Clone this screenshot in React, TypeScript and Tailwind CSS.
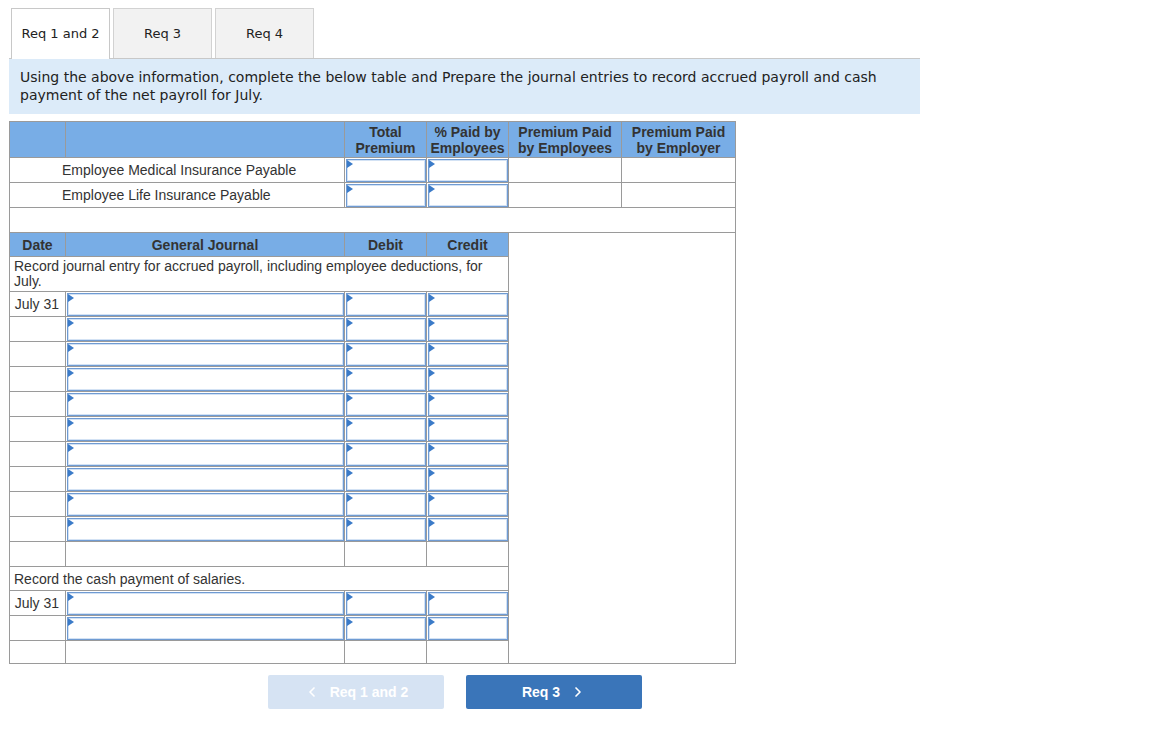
import { ChevronLeft, ChevronRight } from "lucide-react"

const tabs = ["Req 1 and 2", "Req 3", "Req 4"]

// small input box with the blue marker in its corner
function Field() {
  return (
    <div className="relative h-[23px] border border-[#6f9bd3] bg-white shadow-[inset_0_0_0_1px_#d3e2f4]">
      <span className="absolute left-0 top-0 h-0 w-0 border-y-[4px] border-l-[6px] border-y-transparent border-l-[#3b7bc8]" />
    </div>
  )
}

function EntryRow({ date }: { date?: string }) {
  return (
    <tr className="h-[25px]">
      <td className="border border-[#9a9a9a] pr-[6px] text-right align-middle">{date}</td>
      <td className="border border-[#9a9a9a] p-0 pl-px">
        <Field />
      </td>
      <td className="border border-[#9a9a9a] p-0 pl-px">
        <Field />
      </td>
      <td className="border border-[#9a9a9a] p-0 pl-px">
        <Field />
      </td>
    </tr>
  )
}

function EmptyRow({ h = "h-[25px]" }: { h?: string }) {
  return (
    <tr className={h}>
      <td className="border border-[#9a9a9a]" />
      <td className="border border-[#9a9a9a]" />
      <td className="border border-[#9a9a9a]" />
      <td className="border border-[#9a9a9a]" />
    </tr>
  )
}

export default function App() {
  const firstRows = Array.from({ length: 10 }, (_, i) => i)

  return (
    <div className="min-h-[756px] w-[1161px] bg-white pl-[9px] pt-[8px] text-[#333]">
      {/* Tabs */}
      <div className="flex w-[911px] gap-[3px] border-b border-[#c8c8c8] pl-[2px] font-['DejaVu_Sans',sans-serif] text-[13px]">
        {tabs.map((t, i) => (
          <div
            key={t}
            className={
              i === 0
                ? "-mb-px flex h-[51px] w-[99px] items-center justify-center border border-b-0 border-[#c8c8c8] bg-white text-[#222]"
                : "flex h-[50px] w-[99px] items-center justify-center border border-b-0 border-[#d2d2d2] bg-[#f2f2f2] text-[#222]"
            }
          >
            {t}
          </div>
        ))}
      </div>

      {/* Instructions */}
      <div className="w-[911px] bg-[#dcebf9] px-[11px] pb-[10px] pt-[9px] font-['DejaVu_Sans',sans-serif] text-[14px] leading-[18px] text-[#222]">
        Using the above information, complete the below table and Prepare the journal entries to record accrued payroll and cash
        payment of the net payroll for July.
      </div>

      {/* Table */}
      <table className="mt-[7px] w-[726px] table-fixed border-collapse font-['Liberation_Sans',Arial,sans-serif] text-[14px] leading-[16px] text-[#333]">
        <colgroup>
          <col className="w-[56px]" />
          <col className="w-[279px]" />
          <col className="w-[82px]" />
          <col className="w-[82px]" />
          <col className="w-[113px]" />
          <col className="w-[114px]" />
        </colgroup>
        <tbody>
          <tr className="h-[36px] bg-[#78ade6] font-bold">
            <th className="border border-[#9a9a9a]" />
            <th className="border border-[#9a9a9a]" />
            <th className="border border-[#9a9a9a] text-center font-bold">
              Total
              <br />
              Premium
            </th>
            <th className="border border-[#9a9a9a] text-center font-bold">
              % Paid by
              <br />
              Employees
            </th>
            <th className="border border-[#9a9a9a] text-center font-bold">
              Premium Paid
              <br />
              by Employees
            </th>
            <th className="border border-[#9a9a9a] text-center font-bold">
              Premium Paid
              <br />
              by Employer
            </th>
          </tr>
          {["Employee Medical Insurance Payable", "Employee Life Insurance Payable"].map((label) => (
            <tr key={label} className="h-[25px]">
              <td colSpan={2} className="border border-[#9a9a9a] pl-[52px] align-middle">
                {label}
              </td>
              <td className="border border-[#9a9a9a] p-0 pl-px">
                <Field />
              </td>
              <td className="border border-[#9a9a9a] p-0 pl-px">
                <Field />
              </td>
              <td className="border border-[#9a9a9a]" />
              <td className="border border-[#9a9a9a]" />
            </tr>
          ))}
          <tr className="h-[25px]">
            <td colSpan={6} className="border border-[#9a9a9a]" />
          </tr>

          {/* General journal */}
          <tr className="h-[24px] bg-[#78ade6] font-bold">
            <th className="border border-[#9a9a9a] text-center">Date</th>
            <th className="border border-[#9a9a9a] text-center">General Journal</th>
            <th className="border border-[#9a9a9a] text-center">Debit</th>
            <th className="border border-[#9a9a9a] text-center">Credit</th>
            <td rowSpan={17} colSpan={2} className="border border-[#9a9a9a] bg-white" />
          </tr>
          <tr className="h-[35px]">
            <td colSpan={4} className="border border-[#9a9a9a] px-[4px] align-middle leading-[15px]">
              Record journal entry for accrued payroll, including employee deductions, for July.
            </td>
          </tr>
          {firstRows.map((i) => (
            <EntryRow key={i} date={i === 0 ? "July 31" : undefined} />
          ))}
          <EmptyRow />
          <tr className="h-[24px]">
            <td colSpan={4} className="border border-[#9a9a9a] px-[4px] align-middle">
              Record the cash payment of salaries.
            </td>
          </tr>
          <EntryRow date="July 31" />
          <EntryRow />
          <EmptyRow h="h-[23px]" />
        </tbody>
      </table>

      {/* Navigation */}
      <div className="ml-[259px] mt-[11px] flex gap-[22px] font-['Liberation_Sans',Arial,sans-serif] text-[14px] font-bold">
        <button className="flex h-[34px] w-[176px] items-center justify-center gap-[10px] rounded-[2px] bg-[#d6e3f3] text-white">
          <ChevronLeft className="h-4 w-4" strokeWidth={2.5} />
          Req 1 and 2
        </button>
        <button className="flex h-[34px] w-[176px] items-center justify-center gap-[10px] rounded-[2px] bg-[#3a75b9] text-white">
          Req 3
          <ChevronRight className="h-4 w-4" strokeWidth={2.5} />
        </button>
      </div>
    </div>
  )
}
